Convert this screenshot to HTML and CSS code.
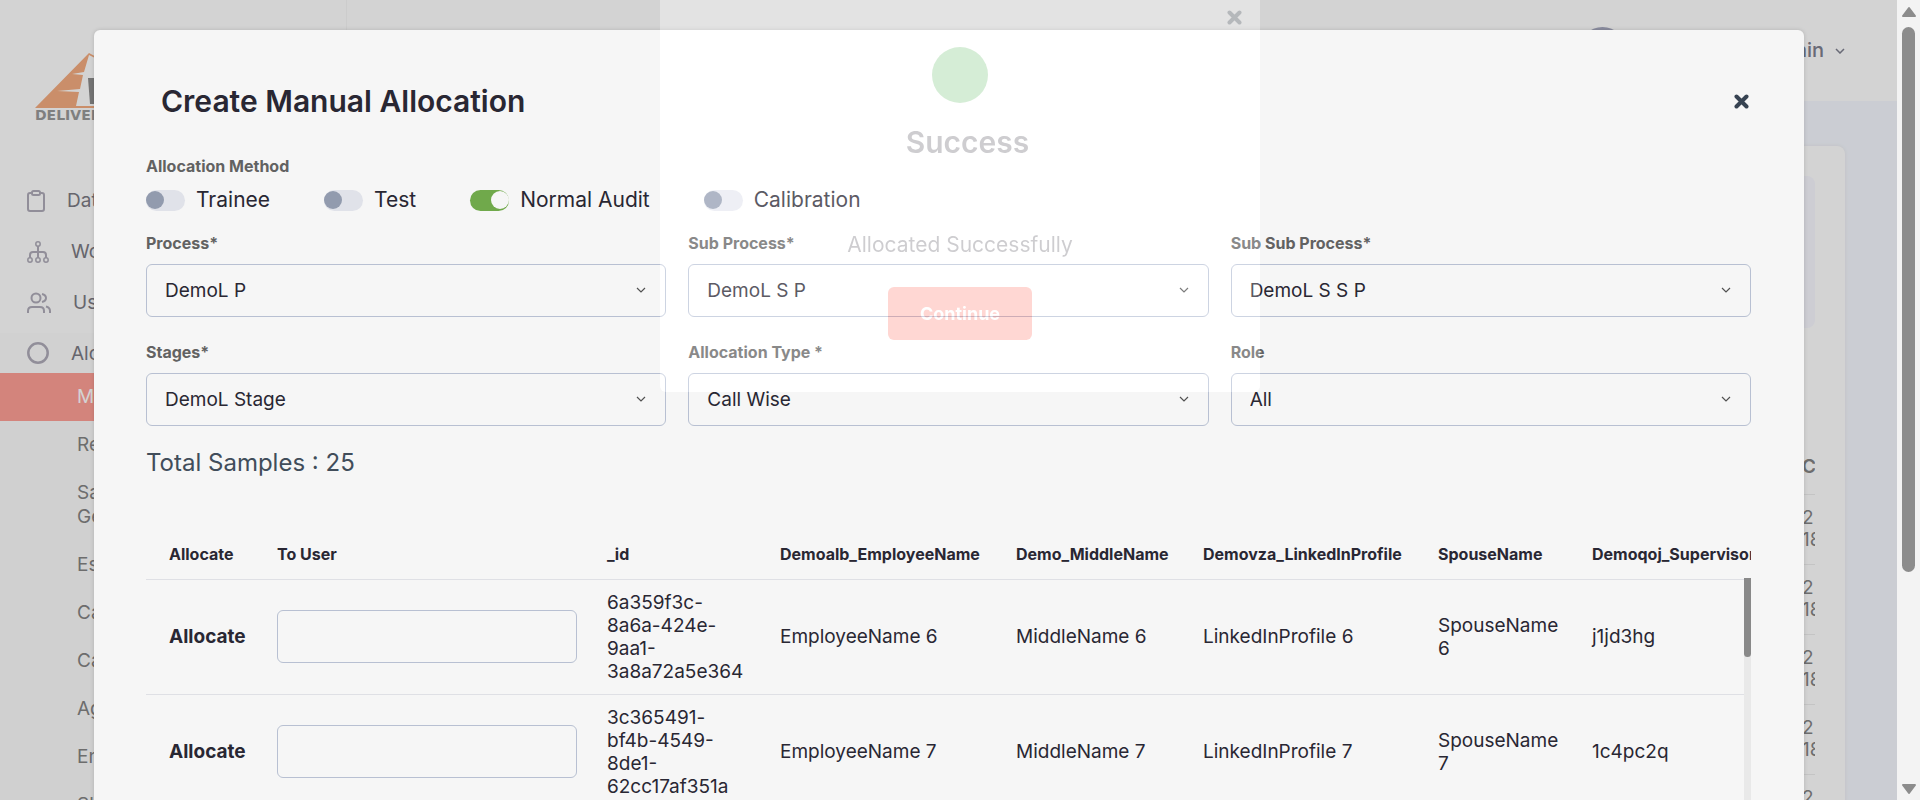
FILE: index.html
```html
<!DOCTYPE html>
<html lang="en">
<head>
<meta charset="utf-8">
<title>Create Manual Allocation</title>
<link rel="stylesheet" href="styles.css">
</head>
<body>
<div class="viewport">
  <div class="app">
    <aside class="sidebar">
      <a class="logo" href="#" aria-label="Home">
        <svg class="logo-mark" viewBox="0 0 80 55" width="80" height="55" aria-hidden="true">
          <path fill="#f5ad80" d="M0 55 54 0 80 14V15L54 2 49 19 37 21 48 22 45 36 22 38 44 39 41 53H80V55Z"/>
          <path fill="#8d8d8d" d="M53 25h8l2 14 5-14h6l4 14v12H55Z"/>
        </svg>
        <span class="logo-name">DELIVER</span>
      </a>
      <nav class="nav">
        <a class="nav-item" href="#">
          <svg viewBox="0 0 18 22" width="18" height="22" fill="none" stroke="currentColor" stroke-width="2"><rect x="1" y="3" width="16" height="18" rx="2"/><rect x="5" y="1" width="8" height="4" rx="1.5" fill="#fff"/></svg>
          <span class="nav-text">Dat</span>
        </a>
        <a class="nav-item" href="#">
          <svg viewBox="0 0 22 22" width="22" height="22" fill="none" stroke="currentColor" stroke-width="1.5"><circle cx="11" cy="3" r="2.2"/><circle cx="3" cy="19" r="2.2"/><circle cx="11" cy="19" r="2.2"/><circle cx="19" cy="19" r="2.2"/><path stroke-width="2" d="M11 5v12M3 17v-3q0-3 3-3h10q3 0 3 3v3"/></svg>
          <span class="nav-text">Wo</span>
        </a>
        <a class="nav-item" href="#">
          <svg viewBox="0 0 24 22" width="24" height="22" fill="none" stroke="currentColor" stroke-width="2"><circle cx="9" cy="6" r="4.5"/><path d="M1 21v-2q0-4 4-4h8q4 0 4 4v2M15 2q4 1 4 4t-4 4M19 14.500q4 1 4 4.500v2"/></svg>
          <span class="nav-text">Us</span>
        </a>
        <a class="nav-item nav-item-open" href="#">
          <svg viewBox="0 0 22 22" width="22" height="22" fill="none" stroke="currentColor" stroke-width="2.500"><circle cx="11" cy="11" r="9.700"/></svg>
          <span class="nav-text">Alo</span>
        </a>
        <div class="subnav">
          <a class="subnav-item subnav-active" href="#">Ma</a>
          <a class="subnav-item" href="#">Re</a>
          <a class="subnav-item" href="#">Sa<br>Ge</a>
          <a class="subnav-item" href="#">Es</a>
          <a class="subnav-item" href="#">Ca</a>
          <a class="subnav-item" href="#">Ca</a>
          <a class="subnav-item" href="#">Ag</a>
          <a class="subnav-item" href="#">En</a>
          <a class="subnav-item" href="#">Sh</a>
        </div>
      </nav>
    </aside>
    <div class="page">
      <header class="topbar">
        <span class="avatar"></span>
        <button class="account" type="button">Admin
          <svg viewBox="0 0 10 6" width="10" height="6" fill="none" stroke="currentColor" stroke-width="1.5"><path d="M1 1l4 4 4-4"/></svg>
        </button>
      </header>
      <section class="card">
        <div class="panel"></div>
        <div class="history">
          <table class="history-table">
            <thead><tr><th>C</th></tr></thead>
            <tbody>
              <tr><td>2<br>18</td></tr>
              <tr><td>2<br>18</td></tr>
              <tr><td>2<br>18</td></tr>
              <tr><td>2<br>18</td></tr>
              <tr><td>2<br>18</td></tr>
            </tbody>
          </table>
        </div>
      </section>
    </div>

    <div class="overlay">
      <form class="modal" role="dialog" aria-labelledby="modal-title">
        <div class="modal-head">
          <h1 class="modal-title" id="modal-title">Create Manual Allocation</h1>
          <button class="close" type="button" aria-label="Close">
            <svg viewBox="0 0 15 15" width="15" height="15" stroke="currentColor" stroke-width="4" stroke-linecap="round"><path d="M2.500 2.500l10 10M12.500 2.500l-10 10"/></svg>
          </button>
        </div>
        <div class="label method-label">Allocation Method</div>
        <div class="methods">
          <label class="method"><input class="switch" type="checkbox">Trainee</label>
          <label class="method"><input class="switch" type="checkbox">Test</label>
          <label class="method"><input class="switch" type="checkbox" checked>Normal Audit</label>
          <label class="method"><input class="switch" type="checkbox">Calibration</label>
        </div>
        <div class="fields">
          <div class="field">
            <label class="label" for="process">Process*</label>
            <div class="select-box"><select class="control" id="process"><option>DemoL P</option></select>
              <svg class="chevron" viewBox="0 0 10 6" width="10" height="6"><path d="M1 1l4 4 4-4"/></svg></div>
          </div>
          <div class="field">
            <label class="label" for="sub-process">Sub Process*</label>
            <div class="select-box"><select class="control" id="sub-process"><option>DemoL S P</option></select>
              <svg class="chevron" viewBox="0 0 10 6" width="10" height="6"><path d="M1 1l4 4 4-4"/></svg></div>
          </div>
          <div class="field">
            <label class="label" for="sub-sub-process">Sub Sub Process*</label>
            <div class="select-box"><select class="control" id="sub-sub-process"><option>DemoL S S P</option></select>
              <svg class="chevron" viewBox="0 0 10 6" width="10" height="6"><path d="M1 1l4 4 4-4"/></svg></div>
          </div>
          <div class="field">
            <label class="label" for="stages">Stages*</label>
            <div class="select-box"><select class="control" id="stages"><option>DemoL Stage</option></select>
              <svg class="chevron" viewBox="0 0 10 6" width="10" height="6"><path d="M1 1l4 4 4-4"/></svg></div>
          </div>
          <div class="field">
            <label class="label" for="type">Allocation Type *</label>
            <div class="select-box"><select class="control" id="type"><option>Call Wise</option></select>
              <svg class="chevron" viewBox="0 0 10 6" width="10" height="6"><path d="M1 1l4 4 4-4"/></svg></div>
          </div>
          <div class="field">
            <label class="label" for="role">Role</label>
            <div class="select-box"><select class="control" id="role"><option>All</option></select>
              <svg class="chevron" viewBox="0 0 10 6" width="10" height="6"><path d="M1 1l4 4 4-4"/></svg></div>
          </div>
        </div>
        <p class="total">Total Samples : 25</p>
        <div class="samples">
          <table class="samples-table">
            <colgroup>
              <col class="col-allocate"><col class="col-user"><col class="col-id"><col class="col-employee">
              <col class="col-middle"><col class="col-linkedin"><col class="col-spouse"><col class="col-supervisor">
            </colgroup>
            <thead>
              <tr><th>Allocate</th><th>To User</th><th>_id</th><th>Demoalb_EmployeeName</th><th>Demo_MiddleName</th><th>Demovza_LinkedInProfile</th><th>SpouseName</th><th>Demoqoj_Supervisor</th></tr>
            </thead>
            <tbody>
              <tr>
                <td><button class="allocate" type="button">Allocate</button></td>
                <td><input class="control" type="text" aria-label="To user, row 1"></td>
                <td>6a359f3c-8a6a-424e-9aa1-3a8a72a5e364</td>
                <td>EmployeeName 6</td><td>MiddleName 6</td><td>LinkedInProfile 6</td><td>SpouseName 6</td><td>j1jd3hg</td>
              </tr>
              <tr>
                <td><button class="allocate" type="button">Allocate</button></td>
                <td><input class="control" type="text" aria-label="To user, row 2"></td>
                <td>3c365491-bf4b-4549-8de1-62cc17af351a</td>
                <td>EmployeeName 7</td><td>MiddleName 7</td><td>LinkedInProfile 7</td><td>SpouseName 7</td><td>1c4pc2q</td>
              </tr>
            </tbody>
          </table>
          <div class="samples-scroll"><div class="samples-thumb"></div></div>
        </div>
      </form>
    </div>
  </div>
  <div class="scrollbar">
    <svg viewBox="0 0 16 12" width="16" height="12"><path d="M8 2l6 8H2Z"/></svg>
    <div class="scroll-track"><div class="scroll-thumb"></div></div>
    <svg viewBox="0 0 16 12" width="16" height="12"><path d="M8 10l6-8H2Z"/></svg>
  </div>
</div>

<div class="toast" role="alert">
  <button class="close toast-close" type="button" aria-label="Close message">
    <svg viewBox="0 0 15 15" width="15" height="15" stroke="currentColor" stroke-width="4" stroke-linecap="round"><path d="M2.500 2.500l10 10M12.500 2.500l-10 10"/></svg>
  </button>
  <span class="toast-icon"></span>
  <h2 class="toast-title">Success</h2>
  <p class="toast-text">Allocated Successfully</p>
  <button class="toast-button" type="button">Continue</button>
</div>
</body>
</html>
```
FILE: styles.css
```css
* { box-sizing: border-box; }

body {
  margin: 0;
  height: 100vh;
  overflow: hidden;
  font-family: Inter, "Liberation Sans", sans-serif;
  font-size: 19px;
  line-height: 23px;
  color: #2b2935;
}

button, input, select { font: inherit; color: inherit; }
button { border: 0; padding: 0; background: none; cursor: pointer; }
a { color: inherit; text-decoration: none; }
h1, h2, p { margin: 0; }

.viewport { display: flex; height: 100vh; }

.app {
  position: relative;
  flex: 1;
  min-width: 0;
  display: flex;
  overflow: hidden;
  background: #f6f9ff;
}

/* Sidebar */
.sidebar {
  width: 347px;
  flex: none;
  background: #fff;
  border-right: 1px solid #f7f7f7;
}

.logo { display: block; padding: 53px 0 0 35px; height: 175px; }
.logo-mark { display: block; }
.logo-name {
  display: block;
  font: bold 14px/14px "DejaVu Sans", sans-serif;
  color: #9a9a9a;
}

.nav-item {
  display: flex;
  align-items: center;
  gap: 22px;
  height: 51px;
  padding-left: 27px;
  color: #b0adba;
}
.nav-item-open { background: #fdfdfd; height: 40px; margin-top: 5px; }
.nav-text { color: #7c7b84; }

.subnav { background: #fcfcfc; }
.subnav-item {
  display: block;
  padding: 12px 0 12px 77px;
  line-height: 24px;
  color: #858585;
}
.subnav-active { background: #ffa097; color: #fff; }

/* Page behind the dialog */
.page { flex: 1; min-width: 0; }

.topbar {
  display: flex;
  justify-content: flex-end;
  align-items: center;
  gap: 137px;
  height: 101px;
  padding-right: 52px;
  background: #fff;
}
.avatar { width: 47px; height: 47px; border-radius: 50%; background: #a8abc0; }
.account {
  display: flex;
  align-items: center;
  gap: 11px;
  font-size: 20px;
  font-weight: 500;
  color: #7f8090;
}

.card {
  margin: 45px 52px 0 50px;
  padding: 30px 30px 0;
  height: 100vh;
  border-radius: 8px;
  background: #fff;
  box-shadow: 0 0 4px #e9e9ee;
}
.panel { height: 152px; border-radius: 8px; background: #f9f9ff; }
.history { width: 13px; margin: 112px 0 0 auto; overflow: hidden; }
.history-table { border-collapse: collapse; color: #858585; line-height: 22px; }
.history-table th { height: 54px; padding: 0; border-bottom: 1px solid #eee; font-weight: 600; text-align: left; }
.history-table td { height: 70px; padding: 0; border-bottom: 1px solid #eee; }

/* Dialog */
.overlay {
  position: absolute;
  inset: 0;
  padding: 30px 93px 0 94px;
  background: rgba(0, 0, 0, .14);
}
.modal {
  min-height: 100%;
  padding: 48px 53px 0 52px;
  border-radius: 6px 6px 0 0;
  background: #fff;
  box-shadow: 0 0 4px rgba(0, 0, 0, .15);
}
.modal-head {
  display: flex;
  justify-content: space-between;
  align-items: center;
  padding: 0 2px 0 15px;
}
.modal-title { font-size: 30px; line-height: 46px; font-weight: 600; }
.close { display: flex; color: #3a4655; }

.label {
  display: block;
  font-size: 16px;
  line-height: 20px;
  font-weight: 700;
  color: #666;
}
.method-label { margin-top: 32px; }

.methods { display: flex; gap: 54px; margin-top: 12px; }
.method { display: flex; align-items: center; gap: 11px; font-size: 21px; line-height: 24px; }
.switch {
  appearance: none;
  width: 39px;
  height: 21px;
  margin: 0;
  padding: 1px 0;
  border-radius: 11px;
  background: #e9ebf2;
}
.switch::before {
  content: "";
  display: block;
  width: 18px;
  height: 18px;
  border-radius: 50%;
  background: #98a1b5;
}
.switch:checked { background: #75b04e; }
.switch:checked::before { margin-left: auto; background: #fff; }

.fields {
  display: grid;
  grid-template-columns: repeat(3, 1fr);
  gap: 25px 22px;
  margin-top: 21px;
}
.select-box { position: relative; margin-top: 11px; }
.control {
  display: block;
  appearance: none;
  width: 100%;
  height: 53px;
  padding: 0 18px;
  border: 1px solid #bfc8da;
  border-radius: 6px;
  background: transparent;
}
.chevron {
  position: absolute;
  right: 20px;
  top: 23px;
  fill: none;
  stroke: #555;
  stroke-width: 1.2;
}

.total { margin-top: 22px; font-size: 24px; line-height: 30px; color: #44505e; }

.samples { position: relative; margin-top: 52px; overflow: hidden; }
.samples-table { table-layout: fixed; width: 1680px; border-collapse: collapse; }
.samples-table th, .samples-table td {
  padding: 11px 15px;
  text-align: left;
  border-bottom: 1px solid #e8e9ee;
}
.samples-table th { height: 49px; font-size: 16px; font-weight: 700; white-space: nowrap; }
.samples-table th:first-child, .samples-table td:first-child { padding-left: 23px; padding-right: 0; }
.col-allocate { width: 116px; }
.col-user { width: 330px; }
.col-id { width: 173px; }
.col-employee { width: 236px; }
.col-middle { width: 187px; }
.col-linkedin { width: 235px; }
.col-spouse { width: 154px; }
.allocate { font-weight: 700; }

.samples-scroll {
  position: absolute;
  top: 48px;
  right: 0;
  bottom: 0;
  width: 7px;
  background: #f2f2f2;
}
.samples-thumb { height: 79px; border-radius: 0 0 4px 4px; background: #8e8e8e; }

/* Window scrollbar */
.scrollbar {
  flex: none;
  display: flex;
  flex-direction: column;
  align-items: center;
  gap: 9px;
  width: 23px;
  padding: 6px 0 5px;
  background: #fcfcfc;
  fill: #929292;
  stroke: #929292;
  stroke-width: 2;
  stroke-linejoin: round;
}
.scroll-track { flex: 1; width: 13px; }
.scroll-thumb { height: 73%; border-radius: 7px; background: #929292; }

/* Fading confirmation; its spread shadow is the page backdrop */
.toast {
  position: fixed;
  top: 0;
  left: 50%;
  display: flex;
  flex-direction: column;
  align-items: center;
  width: 600px;
  margin-left: -300px;
  padding: 10px 18px 52px;
  border-radius: 0 0 6px 6px;
  background: #fff;
  box-shadow: 0 0 0 100vmax rgba(0, 0, 0, .16);
  opacity: .23;
}
.toast-close { align-self: flex-end; }
.toast-icon { width: 56px; height: 56px; margin-top: 22px; border-radius: 50%; background: #4caf50; }
.toast-title { margin-top: 21px; padding-left: 15px; font-size: 30px; line-height: 36px; font-weight: 600; }
.toast-text { margin-top: 71px; font-size: 21px; line-height: 28px; }
.toast-button {
  width: 144px;
  height: 53px;
  margin-top: 28px;
  border-radius: 6px;
  background: #ff5343;
  color: #fff;
  font-size: 18px;
  font-weight: 700;
}
```
